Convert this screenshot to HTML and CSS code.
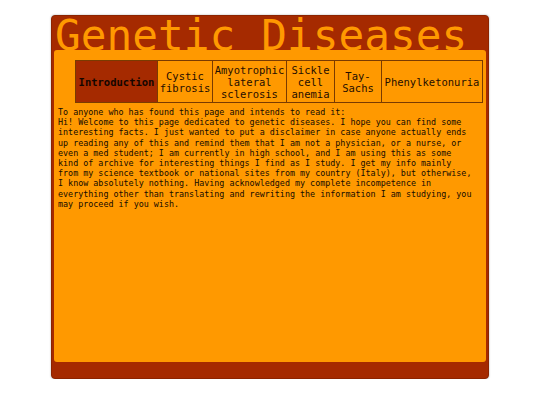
FILE: index.html
```html
<!DOCTYPE html>
<html>
<head>
<meta charset="utf-8">
<title>Genetic Diseases</title>
<link rel="stylesheet" href="styles.css">
</head>
<body>
<div class="page">
  <h1 class="title">Genetic Diseases</h1>
  <div class="content">
    <nav class="nav">
      <div class="tab tab-intro active">Introduction</div>
      <div class="tab tab-cf">Cystic<br>fibrosis</div>
      <div class="tab tab-als">Amyotrophic<br>lateral<br>sclerosis</div>
      <div class="tab tab-sca">Sickle<br>cell<br>anemia</div>
      <div class="tab tab-ts">Tay-<br>Sachs</div>
      <div class="tab tab-pku">Phenylketonuria</div>
    </nav>
    <p class="intro">To anyone who has found this page and intends to read it:<br>Hi! Welcome to this page dedicated to genetic diseases. I hope you can find some interesting facts. I just wanted to put a disclaimer in case anyone actually ends up reading any of this and remind them that I am not a physician, or a nurse, or even a med student; I am currently in high school, and I am using this as some kind of archive for interesting things I find as I study. I get my info mainly from my science textbook or national sites from my country (Italy), but otherwise, I know absolutely nothing. Having acknowledged my complete incompetence in everything other than translating and rewriting the information I am studying, you may proceed if you wish.</p>
  </div>
</div>
</body>
</html>
```

FILE: styles.css
```css
html, body {
  margin: 0;
  padding: 0;
  background: #ffffff;
}
body {
  font-family: "DejaVu Sans Mono", monospace;
}
.page {
  box-sizing: border-box;
  margin: 15px 0 0 51px;
  width: 438px;
  height: 364px;
  background: #a52a00;
  border: 1px solid #8c2400;
  border-radius: 4px;
  padding: 0 2px;
  box-shadow: 0 0 2px rgba(0, 0, 0, 0.35);
}
.title {
  margin: 0;
  height: 34px;
  overflow: hidden;
  font-family: "DejaVu Sans Mono", monospace;
  font-weight: normal;
  font-size: 42.8px;
  line-height: 38px;
  color: #ff9900;
  white-space: nowrap;
  padding-left: 1px;
}
.content {
  box-sizing: border-box;
  height: 312px;
  background: #ff9900;
  border-radius: 3px;
  padding: 10px 4px 0 4px;
}
.nav {
  display: flex;
  box-sizing: border-box;
  width: 408px;
  height: 43px;
  margin-left: 17px;
  border: 1px solid #7a3b00;
}
.tab {
  box-sizing: border-box;
  display: flex;
  align-items: center;
  justify-content: center;
  text-align: center;
  font-size: 10.5px;
  line-height: 12px;
  color: #1f0e00;
  border-left: 1px solid #7a3b00;
}
.tab-intro {
  width: 81px;
  border-left: none;
  font-weight: bold;
}
.active {
  background: #a52a00;
  color: #140600;
}
.tab-cf { width: 55px; }
.tab-als { width: 74px; }
.tab-sca { width: 48px; }
.tab-ts { width: 47px; }
.tab-pku { width: 101px; }
.intro {
  margin: 4px 0 0 0;
  width: 416px;
  font-size: 8.4px;
  line-height: 10.2px;
  color: #140b00;
}
```
